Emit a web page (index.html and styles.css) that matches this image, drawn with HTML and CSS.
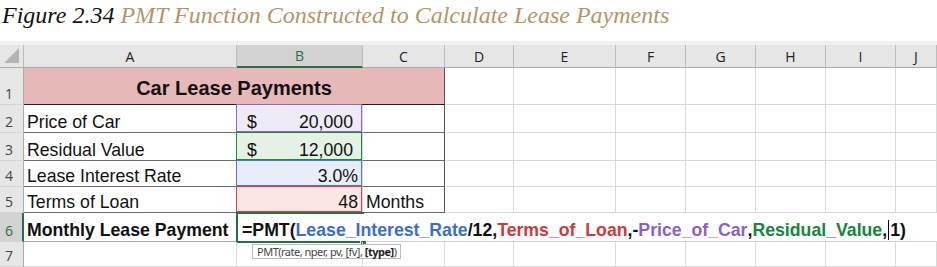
FILE: index.html
```html
<!DOCTYPE html>
<html lang="en">
<head>
    <meta charset="UTF-8">
    <title>PMT Function Constructed to Calculate Lease Payments</title>
    <link rel="stylesheet" href="styles.css">
</head>
<body>

<div class="fig-title">
    <span class="fig-num">Figure 2.34</span> PMT Function Constructed to Calculate Lease Payments
</div>

<div class="sheet">
    <!-- Encabezado de columnas -->
    <div class="hd corner"><span class="tri"></span></div>
    <div class="hd">A</div>
    <div class="hd sel">B</div>
    <div class="hd">C</div>
    <div class="hd">D</div>
    <div class="hd">E</div>
    <div class="hd">F</div>
    <div class="hd">G</div>
    <div class="hd">H</div>
    <div class="hd">I</div>
    <div class="hd">J</div>

    <!-- Fila 1 -->
    <div class="rn">1</div>
    <div class="c title-cell">Car Lease Payments</div>
    <div class="c"></div><div class="c"></div><div class="c"></div><div class="c"></div>
    <div class="c"></div><div class="c"></div><div class="c"></div>

    <!-- Fila 2 -->
    <div class="rn">2</div>
    <div class="c tb">Price of Car</div>
    <div class="c tb money hl purple"><span>$</span><span>20,000</span></div>
    <div class="c tb tr"></div>
    <div class="c"></div><div class="c"></div><div class="c"></div><div class="c"></div><div class="c"></div><div class="c"></div><div class="c"></div>

    <!-- Fila 3 -->
    <div class="rn">3</div>
    <div class="c tb">Residual Value</div>
    <div class="c tb money hl green"><span>$</span><span>12,000</span></div>
    <div class="c tb tr"></div>
    <div class="c"></div><div class="c"></div><div class="c"></div><div class="c"></div><div class="c"></div><div class="c"></div><div class="c"></div>

    <!-- Fila 4 -->
    <div class="rn">4</div>
    <div class="c tb">Lease Interest Rate</div>
    <div class="c tb num hl blue">3.0%</div>
    <div class="c tb tr"></div>
    <div class="c"></div><div class="c"></div><div class="c"></div><div class="c"></div><div class="c"></div><div class="c"></div><div class="c"></div>

    <!-- Fila 5 -->
    <div class="rn">5</div>
    <div class="c tb">Terms of Loan</div>
    <div class="c tb num hl red">48</div>
    <div class="c tb tr">Months</div>
    <div class="c"></div><div class="c"></div><div class="c"></div><div class="c"></div><div class="c"></div><div class="c"></div><div class="c"></div>

    <!-- Fila 6 -->
    <div class="rn sel">6</div>
    <div class="c bold row6">Monthly Lease Payment</div>
    <div class="c formula">
        =PMT(<span class="f-blue">Lease_Interest_Rate</span>/12,<span class="f-red">Terms_of_Loan</span>,-<span class="f-purple">Price_of_Car</span>,<span class="f-green">Residual_Value</span>,<span class="caret"></span>1)
        <div class="tip">PMT(rate, nper, pv, [fv], <b>[type]</b>)</div>
    </div>

    <!-- Fila 7 -->
    <div class="rn">7</div>
    <div class="c"></div><div class="c"></div><div class="c"></div><div class="c"></div><div class="c"></div>
    <div class="c"></div><div class="c"></div><div class="c"></div><div class="c"></div><div class="c"></div>
</div>

</body>
</html>
```

FILE: styles.css
```css
body {
    margin: 0;
    padding: 0;
    background-color: white;
    font-family: "Liberation Sans", Arial, sans-serif;
    overflow: hidden;
}

/* Titulo de la figura */
.fig-title {
    height: 41px;
    padding-left: 2px;
    font-family: "Liberation Serif", serif;
    font-style: italic;
    font-size: 24px;
    line-height: 30px;
    color: #b4956a;
    white-space: nowrap;
}

.fig-num {
    color: #111;
}

/* Hoja de calculo */
.sheet {
    display: grid;
    grid-template-columns: 24px 213px 126px 82px 69px 102px 70px 70px 70px 70px 41px;
    grid-template-rows: 23px 37px 28px 28px 26px 26px 29px 25px;
    border-top: 4px solid #f1f1f1;
}

.sheet > div {
    box-sizing: border-box;
}

.hd {
    background-color: #e6e6e6;
    border-right: 1px solid #bdbdbd;
    border-bottom: 1px solid #ababab;
    font-family: "Open Sans", sans-serif;
    font-size: 14px;
    color: #222;
    display: flex;
    align-items: center;
    justify-content: center;
}

.hd.sel {
    background-color: #d2d2d2;
    color: #217346;
    border-bottom: 2px solid #217346;
}

.corner {
    position: relative;
}

.tri {
    position: absolute;
    right: 4px;
    bottom: 4px;
    width: 0;
    height: 0;
    border-left: 15px solid transparent;
    border-bottom: 15px solid #b4b4b4;
}

.rn {
    background-color: #e6e6e6;
    border-right: 1px solid #ababab;
    border-bottom: 1px solid #d4d4d4;
    font-family: "Open Sans", sans-serif;
    font-size: 14px;
    color: #444;
    display: flex;
    align-items: flex-end;
    padding: 0 0 0 5px;
    line-height: 20px;
}

.rn.sel {
    background-color: #d2d2d2;
    color: #217346;
    border-right: 2px solid #217346;
}

.c {
    border-right: 1px solid #d9d9d9;
    border-bottom: 1px solid #d9d9d9;
    font-size: 17.7px;
    color: #111;
    display: flex;
    align-items: flex-end;
    padding: 0 3px 0 3px;
    line-height: 19px;
    white-space: nowrap;
    position: relative;
}

.title-cell {
    grid-column: 2 / 5;
    background-color: #e6b8b7;
    border-right: 1px solid #555;
    border-bottom: 1px solid #222;
    justify-content: center;
    align-items: center;
    font-weight: bold;
    font-size: 20px;
    padding-top: 4px;
}

.tb {
    border-bottom-color: #6d6d6d;
}

.tr {
    border-right-color: #555;
}

.num {
    justify-content: flex-end;
    padding-right: 4px;
}

.money {
    justify-content: space-between;
    padding: 0 9px 0 10px;
}

/* Referencias de color de la formula */
.hl::after {
    content: "";
    position: absolute;
    top: -1px;
    left: -1px;
    right: 0;
    bottom: 0;
    border: 1px solid;
}

.purple { background-color: #efebf6; }
.purple::after { border-color: #8c66cc; }
.green { background-color: #e4f1e4; }
.green::after { border-color: #1f8a35; }
.blue { background-color: #e7eef9; }
.blue::after { border-color: #4a78d2; }
.red { background-color: #fbe6e5; }
.red::after { border-color: #d0454a; }

.bold {
    font-weight: bold;
}

.row6 {
    border-bottom-color: #a6a6a6;
    padding-bottom: 1px;
}

.formula {
    grid-column: 3 / -1;
    border-right: none;
    font-weight: bold;
    padding: 0 0 1px 5px;
    border-bottom-color: #d4d4d4;
}

/* Celda activa: el texto desborda, sin borde derecho */
.formula::before {
    content: "";
    position: absolute;
    top: -1px;
    left: -1px;
    width: 128px;
    height: 31px;
    box-sizing: border-box;
    border: 2px solid #217346;
    border-right: none;
}

.formula::after {
    content: "";
    position: absolute;
    top: 27px;
    left: 123px;
    width: 5px;
    height: 5px;
    background-color: #217346;
    border: 1px solid white;
}

.f-blue { color: #3a6dd1; }
.f-red { color: #cc3a3f; }
.f-purple { color: #8a5fcb; }
.f-green { color: #14853a; }

.caret {
    display: inline-block;
    width: 1px;
    height: 20px;
    margin: 0 1px 0 1px;
    background-color: #000;
    vertical-align: -4px;
}

.tip {
    position: absolute;
    top: 31px;
    left: 15px;
    width: 149px;
    height: 15px;
    box-sizing: border-box;
    background-color: white;
    border: 1px solid #bcbcbc;
    font-family: "Noto Sans", sans-serif;
    font-weight: normal;
    font-size: 11px;
    letter-spacing: -0.5px;
    line-height: 13px;
    color: #444;
    padding-left: 4px;
    z-index: 2;
}

.tip b {
    color: #222;
}
```
